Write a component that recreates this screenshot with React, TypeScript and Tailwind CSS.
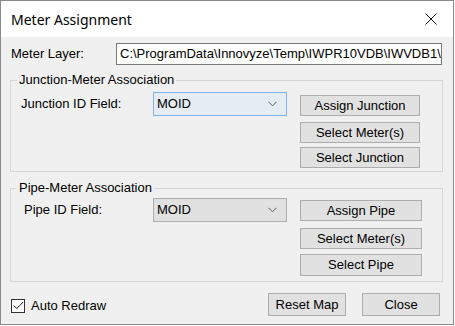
import React from 'react';

// Classic WinForms-style dialog: Meter Assignment

function Button({ label, className }: { label: string; className: string }) {
  return (
    <div
      className={`flex items-center justify-center bg-[#e1e1e1] border border-[#adadad] text-[13px] text-black ${className}`}
    >
      {label}
    </div>
  );
}

function Combo({ value, focused }: { value: string; focused?: boolean }) {
  return (
    <div
      className={`flex items-center justify-between w-[134px] h-[24px] pl-[3px] pr-[9px] border text-[13px] ${
        focused ? 'bg-[#e5ecf3] border-[#7eb4ea]' : 'bg-[#e1e1e1] border-[#adadad]'
      }`}
    >
      <span>{value}</span>
      <svg width="9" height="6" viewBox="0 0 9 6">
        <path d="M0.5 0.8 L4.5 4.8 L8.5 0.8" fill="none" stroke="#606060" strokeWidth="1" />
      </svg>
    </div>
  );
}

function GroupBox({ title, className, children }: { title: string; className: string; children: React.ReactNode }) {
  return (
    <div className={`relative border border-[#d5d5d5] ml-[9px] w-[433px] ${className}`}>
      <span className="absolute -top-[9px] left-[6px] px-[2px] bg-[#f0f0f0] text-[13px] leading-[16px]">{title}</span>
      {children}
    </div>
  );
}

export default function App() {
  return (
    <div className="w-[455px] h-[326px] bg-white font-['Liberation_Sans',Arial,sans-serif] text-black">
      <div className="flex flex-col w-[454px] h-[325px] border border-[#8a8a8a]">
        {/* title bar */}
        <div className="flex items-center justify-between h-[36px] bg-white pl-[10px] pr-[16px] shrink-0">
          <span className="font-['Noto_Sans',sans-serif] text-[14px] pt-[1px]">Meter Assignment</span>
          <svg width="12" height="12" viewBox="0 0 12 12">
            <path d="M0.5 0.5 L11.5 11.5 M11.5 0.5 L0.5 11.5" stroke="#111" strokeWidth="1" />
          </svg>
        </div>

        <div className="flex-1 bg-[#f0f0f0] flex flex-col">
          {/* meter layer */}
          <div className="flex items-center mt-[6px] h-[22px]">
            <span className="ml-[10px] w-[105px] text-[13px]">Meter Layer:</span>
            <div className="w-[326px] h-[22px] bg-white border border-[#7a7a7a] pl-[3px] text-[13px] leading-[20px] overflow-hidden whitespace-nowrap">
              C:\ProgramData\Innovyze\Temp\IWPR10VDB\IWVDB1\
            </div>
          </div>

          <GroupBox title="Junction-Meter Association" className="mt-[15px] h-[92px]">
            <div className="flex items-start mt-[11px]">
              <div className="w-[142px] h-[24px] flex items-center pl-[10px] text-[13px]">Junction ID Field:</div>
              <Combo value="MOID" focused />
              <div className="flex flex-col ml-[13px] mt-[3px]">
                <Button label="Assign Junction" className="w-[120px] h-[21px]" />
                <Button label="Select Meter(s)" className="w-[120px] h-[21px] mt-[6px]" />
                <Button label="Select Junction" className="w-[120px] h-[21px] mt-[4px]" />
              </div>
            </div>
          </GroupBox>

          <GroupBox title="Pipe-Meter Association" className="mt-[16px] h-[94px]">
            <div className="flex items-start mt-[9px]">
              <div className="w-[142px] h-[24px] flex items-center pl-[13px] text-[13px]">Pipe ID Field:</div>
              <Combo value="MOID" />
              <div className="flex flex-col ml-[13px] mt-[2px]">
                <Button label="Assign Pipe" className="w-[122px] h-[21px]" />
                <Button label="Select Meter(s)" className="w-[122px] h-[21px] mt-[7px]" />
                <Button label="Select Pipe" className="w-[122px] h-[22px] mt-[5px]" />
              </div>
            </div>
          </GroupBox>

          {/* footer */}
          <div className="flex items-center mt-[11px] h-[23px]">
            <div className="flex items-center ml-[10px] mt-[2px]">
              <div className="w-[14px] h-[14px] bg-white border border-[#333] flex items-center justify-center">
                <svg width="11" height="9" viewBox="0 0 11 9">
                  <path d="M0.8 4.5 L3.8 7.5 L10.2 1" fill="none" stroke="#222" strokeWidth="1" />
                </svg>
              </div>
              <span className="ml-[6px] text-[13px]">Auto Redraw</span>
            </div>
            <Button label="Reset Map" className="w-[78px] h-[23px] ml-auto" />
            <Button label="Close" className="w-[78px] h-[23px] ml-[16px] mr-[13px]" />
          </div>
        </div>
      </div>
    </div>
  );
}
